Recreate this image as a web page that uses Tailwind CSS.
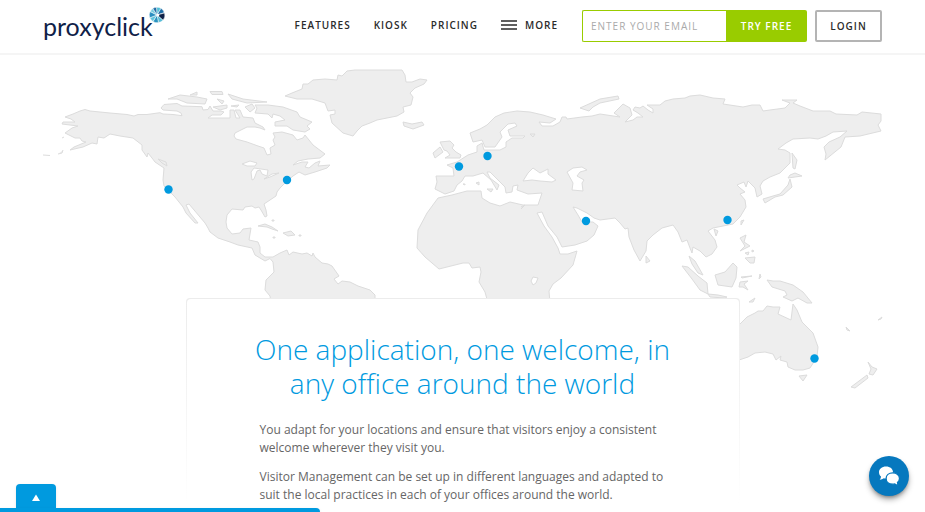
<!DOCTYPE html>
<html lang="en">
<head>
<meta charset="utf-8">
<meta name="viewport" content="width=device-width, initial-scale=1">
<title>Proxyclick</title>
<script src="https://cdn.jsdelivr.net/npm/@tailwindcss/browser@4"></script>
</head>
<body class="min-h-screen bg-white font-['Open_Sans',sans-serif]">
<header class="flex h-[55px] items-start border-b-2 border-[#f5f5f5] px-[43px]">
  <a href="#" class="flex items-start" aria-label="Proxyclick home">
    <span class="pt-2.5 font-['Lato',sans-serif] text-[25px] leading-8 text-[#0f2148]">proxyclick</span>
    <svg class="mt-[7px] -ml-1 size-4" viewBox="0 0 16 16" aria-hidden="true">
      <g stroke="#fff" stroke-width=".5">
        <path d="M8 8 7.500 .3A7.500 7.500 0 0 1 12 1.300Z" fill="#4fc0d8"/>
        <path d="M8 8 12 1.300A7.700 7.700 0 0 1 15.300 5.500Z" fill="#1d6ea8"/>
        <path d="M8 8 15.500 6A7.700 7.700 0 0 1 14 13.300Z" fill="#0f2148"/>
        <path d="M8 8 14 13.300A7.700 7.700 0 0 1 9.500 15.600Z" fill="#58bcd6"/>
        <path d="M8 8 9.500 15.600A7.700 7.700 0 0 1 4 14.500Z" fill="#2a94c0"/>
        <path d="M8 8 4 14.500A7.700 7.700 0 0 1 .8 10.800Z" fill="#62c4dc"/>
        <path d="M8 8 .8 10.800A7.700 7.700 0 0 1 1.200 4.500Z" fill="#2a8fc0"/>
        <path d="M8 8 1.200 4.500A7.700 7.700 0 0 1 3.800 1.500Z" fill="#7acde0"/>
        <path d="M8 8 3.800 1.500A7.700 7.700 0 0 1 7.500 .3Z" fill="#236da5"/>
      </g>
      <circle cx="9" cy="8" r="1.300" fill="#fff"/>
    </svg>
  </a>
  <nav class="mt-[15px] ml-auto flex items-center gap-[23px] text-[10px] leading-5 font-semibold tracking-[1px] text-[#2b2b2b]">
    <a href="#">FEATURES</a>
    <a href="#">KIOSK</a>
    <a href="#">PRICING</a>
    <button type="button" class="flex items-center gap-2">
      <svg class="h-3 w-4" viewBox="0 0 16 12" aria-hidden="true"><path d="M0 2h16M0 6h16M0 10h16" stroke="#2b2b2b" stroke-width="1.500"/></svg>
      MORE
    </button>
  </nav>
  <form class="mt-2.5 ml-6 flex h-8 rounded-xs text-[10px] tracking-[1px]">
    <input type="email" aria-label="Enter your email" placeholder="ENTER YOUR EMAIL" class="w-36 rounded-l-xs border border-r-0 border-[#9c0] bg-white pl-2 text-[#333] placeholder:text-[#aaa] outline-none">
    <button type="submit" class="w-[81px] rounded-r-xs bg-[#9c0] font-semibold text-white">TRY FREE</button>
  </form>
  <a href="#" class="mt-2.5 ml-2 flex h-8 w-[67px] items-center justify-center rounded-xs border-2 border-[#b4b4b4] text-[10px] font-semibold tracking-[1px] text-[#2b2b2b]">LOGIN</a>
</header>

<main class="relative">
  <svg class="absolute inset-x-0 top-0 w-full" viewBox="0 55 925 357" role="img" aria-label="World map with office locations">
    <g fill="#eee" stroke="#dcdcdc" stroke-width="1" stroke-linejoin="round">
      <!-- North and South America -->
      <path d="M65 117 73 114 80 111 85 109.500 90 111 110 113 127 114.500 134 116 138 114.500 147 114.500 160 112.700 163 114 173 114.500 182 115.700 181 113 177 111 163 110 161 108 164 104.500 177 103.500 182 106 202 106.700 203 110 208 109.500 210 106 213 111 221 111 224 112 221 115 212 115 208 118 230 118 230 110 234 110 236 118 240 118 235 110 240 110 243 117 253 118 255 123 263 127 265 130 260 128 255 127 247 127 235 133 234 136 236 139 247 142 258 146 264 148 267 155 271 154 270 148 275 145 273 140 275 137 273 133 282 132 293 135 297 140 303 138 305 135 309 140 313 145 325 154 320 158 308 159 298 161 293 165 302 162 308 162 305 167 309 168 315 163 320 161 318 166 330 165 327 168 315 172 305 175 299 172 293 176 285 183 280 188 277 192 276 196 264 204 266 210 267 216 265 217 261 210 259 207 255 208 252 206 245 207 243 210 232 209 227 215 226 222 227 228 232 234 240 233 243 229 251 228 250 234 249 240 258 242 260 247 260 253 265 257 273 257 280 253 287 250 289 255 293 252 302 254 307 253 312 256 313 253 315 257 322 263 328 264 332 266 339 276 334 279 338 284 342 281 350 282 358 286 370 290 375 295 375 303 271 303 270 296 265 290 266 280 274 272 273 262 270 258.500 265 261 255 255 252 248 238 245 230 242 218 238 210 232 208 228 205 223 189 204 186 205 190 213 198 223 195 223 186 213 183 207 175 197 168 190 164 186 163 180 164 168 155 162 152 158 148 153 147 157 142 150 142 145 133 138 120 136 110 134 104 138 98 137 97 144 92 143 83 147 70 150 74 147 86 142 82 141 80 138 75 138 65 133 72 128 78 126 62 124 63 122 75 122 71 119Z"/>
      <!-- Arctic islands and Baffin -->
      <path d="M255 105 268 105 283 107 297 112 300 117 312 122 307 126 310 129 305 132 293 130 287 126 275 126 275 122 285 120 280 116 273 114 272 118 268 114 255 113 257 108ZM168 99 180 95 197 97 207 99 205 104 187 103 177 99ZM190 95 197 92 197 95ZM210 91.500 222 91.500 223 94.500 212 94.500ZM228 94 243 99 267 102 247 103 232 99ZM217 99 224 101 222 104ZM213 107 227 105 227 108 220 110ZM231 106 239 105 237 107ZM245 107 252 104 255 108 250 112Z"/>
      <!-- Greenland and Iceland -->
      <path d="M285 96 292 93 302 89 303 84 308 84 313 80 325 79 337 80 338 75 342 76 347 71 355 70 402 70 405 75 406 82 412 82 420 79 427 80 424 84 415 88 410 93 413 97 411 105 403 107 404 112 397 116 377 120 370 123 362 126 357 131 353 136 343 133 332 123 330 115 335 114 335 110 328 111 325 103 312 99 297 99ZM403 122 412 124 422 122 424 125 413 129 404 126Z"/>
      <!-- Aleutians, Vancouver Island, Caribbean -->
      <path d="M43 155 50 155.500M58 154 62 153 63 150M62 138 64 137M158 159 166 162 167 166 162 163ZM258 226 265 224 272 227 278 231 272 229 267 227ZM283 233 291 231 295 235 288 236ZM272 220h2v1h-2ZM273 237h2v1h-2ZM299 235h2v1h-2Z"/>
      <!-- British Isles -->
      <path d="M440 142 450 141 454 145 452 148 456 152 461 155 460 158 453 158 445 158 450 155 447 151 444 150 442 146ZM433 153 440 147 443 152 435 158Z"/>
      <!-- Europe, Asia and Africa -->
      <path d="M436 176 454 176 453 168 447 165 457 162 468 155 477 152 477 146 482 143 484 150 500 150 506 147 506 142 512 138 523 138 525 136 510 136 508 130 517 126 515 123 508 124 500 132 502 137 495 147 485 147 482 140 473 142 470 133 480 129 487 125 495 117 504 113 517 111 530 112 543 115 556 119 550 123 539 122 542 126 553 126 560 122 562 117 566 117 567 119 582 117 592 116 600 114 620 117 614 113 623 104 630 108 632 115 625 122 633 120 637 117 643 117 638 113 633 110 635 107 640 108 643 106 648 110 653 113 653 109 647 105 660 105 665 101 673 99 685 98 690 96 700 95 713 98 725 99 723 104 743 107 752 105 760 105 763 111 770 110 785 108 790 103 782 100 797 100 793 103 800 106 813 111 830 111 836 114 857 115 862 112 881 114 881 121 878 125 881 131 860 136 845 137 841 147 825 160 826 154 824 147 829 142 840 137 847 131 833 132 826 136 818 139 810 138 793 139 786 143 778 149 785 150 790 153 790 163 780 173 770 177 763 181 760 186 762 194 757 197 755 188 748 181 746 187 744 182 737 185 740 188 745 192 740 194 745 200 746 207 740 217 733 224 718 227 713 228 708 231 715 240 717 247 712 254 706 257 700 251 693 247 692 253 690 248 687 240 682 242 678 232 673 225 662 228 653 235 647 241 646 251 640 261 634 250 629 237 628 228 625 229 620 223 615 218 600 220 594 218 587 213 577 208 573 207 578 215 582 222 593 222 598 226 594 235 587 241 575 245 562 247 557 237 548 226 542 212 537 213 544 226 552 237 558 248 560 254 568 254 577 251 573 265 561 278 553 284 549 291 550 303 488 303 485 292 479 282 481 272 480 267 472 268 469 263 463 263 439 269 425 257 417 248 418 230 427 213 438 198 452 195 467 191 481 191 482 198 490 203 500 206 510 202 523 205 538 205 542 193 528 194 517 190 518 185 513 186 512 192 506 193 505 187 490 172 487 172 490 178 499 185 497 190 491 180 483 173 473 176 465 176 462 181 457 185 454 191 445 194 435 189 437 182Z"/>
      <!-- Northern, Mediterranean and East Asian islands -->
      <path d="M580 108 600 99 618 96 619 99 600 103 593 107 589 111ZM530 134 535 134 533 137ZM476 183 479 182 479 185ZM487 189 493 189 491 192ZM463 184h2v1ZM521 207 525 205 521 209M792 153 797 160 795 169 793 168ZM790 175 795 173 802 176 788 178ZM790 179 792 187 783 195 775 197 765 203 763 199 773 196 780 194 788 185ZM741 221 744 220 741 225ZM714 229 718 231 716 236ZM646 256 650 261 646 263Z"/>
      <!-- South-East Asia and Oceania -->
      <path d="M740 238 746 235 744 242 750 246 740 251 745 246ZM745 253 749 252 748 255ZM752 250 754 251 752 252ZM745 258 755 257 754 263 750 263ZM689 256 695 261 703 275 698 273 692 264ZM682 266 688 267 698 276 707 283 708 294 700 290 692 279ZM708 294 718 295 727 297 725 298 710 297ZM715 275 725 272 733 263 737 267 736 278 732 287 718 285ZM741 277 752 276 742 278ZM740 282 748 281 744 284 748 290 743 287 739 287ZM760 274 761 277 759 279ZM767 280 773 281 780 281 793 285 803 292 812 303 807 303 798 298 792 301 783 297 787 295 785 291 772 287ZM749 302 755 298 753 302ZM730 330 739 325 747 317 755 313 758 311 763 311 767 306 773 307 780 307 778 314 791 320 793 304 797 310 802 322 813 333 818 347 817 357 810 368 803 370 795 370 788 367 787 362 780 360 781 356 776 360 773 354 765 352 755 353 748 357 739 360 730 360ZM799 376 807 375 803 381ZM868 362 872 367 877 369 873 375 869 374 871 369ZM867 375 868 378 855 388 851 387ZM846 327 850 331 847 330ZM878 320 882 317 881 319Z"/>
    </g>
    <!-- Inland seas and lakes -->
    <path fill="#fff" stroke="#dcdcdc" stroke-linejoin="round" d="M523 181 528 173 533 168 540 173 548 169 548 174 556 180 552 182 540 181 532 180ZM567 172 573 168 582 167 587 170 580 172 577 176 584 180 582 183 583 191 572 190 573 183ZM533 277 538 278 536 283 533 285 531 281ZM242 164 250 161 257 163 255 166 247 166ZM252 180 251 172 254 168 268 170 267 176 262 174 260 170 257 171 254 179ZM264 179 272 174 279 173 270 177Z"/>
    <!-- Office locations -->
    <g fill="#009adf">
      <circle cx="168.500" cy="189.500" r="4.200"/>
      <circle cx="287" cy="180" r="4.200"/>
      <circle cx="459" cy="166.500" r="4.200"/>
      <circle cx="487.500" cy="156" r="4.200"/>
      <circle cx="586" cy="221" r="4.200"/>
      <circle cx="727.500" cy="220" r="4.200"/>
      <circle cx="814.500" cy="358.500" r="4.200"/>
    </g>
  </svg>

  <div class="relative flex justify-center pt-[243px]">
    <section class="w-full max-w-[554px] rounded-sm bg-linear-to-b from-[#ececec] via-[#f5f5f5] to-white p-px">
      <div class="rounded-sm bg-white px-[73px] pt-[33px]">
        <h1 class="-mx-4 text-center text-[28px] leading-[34px] font-light text-[#009adf]">One application, one welcome, in any office around the world</h1>
        <div class="mt-[21px] space-y-[11px] text-[12px] leading-[18px] text-[#666]">
          <p>You adapt for your locations and ensure that visitors enjoy a consistent welcome wherever they visit you.</p>
          <p>Visitor Management can be set up in different languages and adapted to suit the local practices in each of your offices around the world.</p>
        </div>
      </div>
    </section>
  </div>
</main>

<div class="fixed bottom-0 left-0 w-80">
  <button type="button" aria-label="Open panel" class="ml-4 flex h-6 w-10 items-center justify-center rounded-t-sm bg-[#009adf] shadow-sm">
    <svg class="mt-1 size-2" viewBox="0 0 8 8" aria-hidden="true"><path d="M4 .5 8 7H0Z" fill="#fff"/></svg>
  </button>
  <div class="h-1 rounded-tr-sm bg-[#009adf] shadow-sm"></div>
</div>

<button type="button" aria-label="Chat" class="fixed right-4 bottom-4 flex size-10 items-center justify-center rounded-full bg-[#0678be] shadow-md shadow-black/40">
  <svg class="size-6" viewBox="0 0 24 24" aria-hidden="true">
    <path d="M9 2.500C4.900 2.500 2 5 2 8.300c0 1.800.8 3.200 2 4.300 0 1.200-.5 2.200-1.300 3.100 1.700 0 3-.5 4.100-1.400.7.2 1.400.2 2.200.2 4.100 0 7-2.700 7-6.200S13.100 2.500 9 2.500Z" fill="#fff"/>
    <path d="M15.800 8.800c-3.900 0-6.700 2.400-6.700 5.700s2.800 5.700 6.700 5.700c.7 0 1.400-.1 2-.2 1.200.9 2.400 1.400 4 1.400-.8-.8-1.200-1.700-1.300-2.800 1.300-1.100 2-2.500 2-4.100 0-3.300-2.800-5.700-6.700-5.700Z" fill="#fff" stroke="#0678be" stroke-width="1.300"/>
  </svg>
</button>
</body>
</html>
